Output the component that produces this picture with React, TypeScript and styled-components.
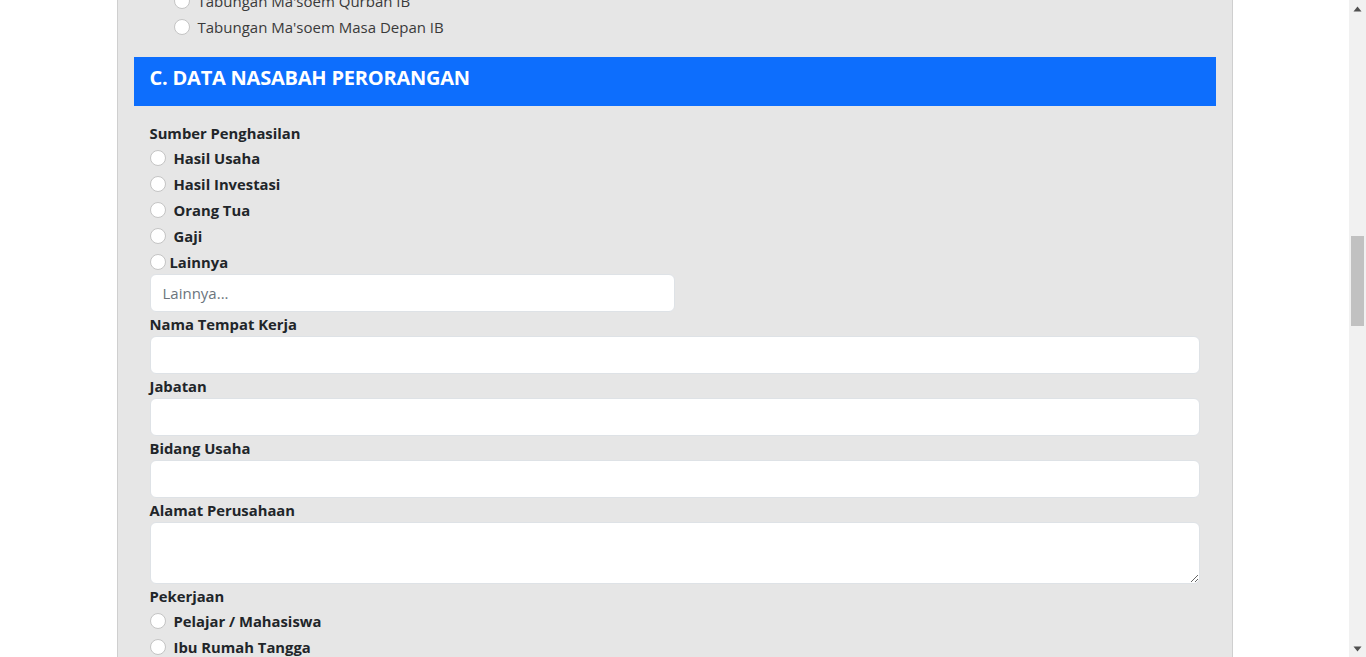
import React from "react";
import styled, { createGlobalStyle } from "styled-components";

const Global = createGlobalStyle`
  html, body { margin: 0; padding: 0; height: 100%; overflow: hidden; background: #fff; }
  body { font-family: "Open Sans", "Noto Sans", sans-serif; color: #212529; }
  #root { height: 100%; }
`;

const Viewport = styled.div`
  display: flex;
  height: 657px;
  width: 1366px;
  overflow: hidden;
`;

const Page = styled.div`
  flex: 1;
  overflow: hidden;
  background: #fff;
`;

const Sheet = styled.div`
  width: 1116px;
  box-sizing: border-box;
  margin: -12px auto 0;
  background: #e6e6e6;
  border-left: 1px solid #cfcfcf;
  border-right: 1px solid #cfcfcf;
  padding: 0 16px;
  min-height: 700px;
`;

const OptionList = styled.div<{ $indent?: boolean }>`
  display: flex;
  flex-direction: column;
  padding-left: ${(p) => (p.$indent ? "40px" : "0")};
`;

const OptionRow = styled.label<{ $bold?: boolean; $tight?: boolean }>`
  display: flex;
  align-items: center;
  height: 26px;
  font-size: ${(p) => (p.$bold ? "14.8px" : "15px")};
  font-weight: ${(p) => (p.$bold ? 700 : 400)};
  color: ${(p) => (p.$bold ? "#212529" : "#3a3a3a")};
  gap: ${(p) => (p.$tight ? "4px" : "8px")};
  white-space: nowrap;
`;

const Radio = styled.span`
  width: 16px;
  height: 16px;
  box-sizing: border-box;
  border-radius: 50%;
  background: #fff;
  border: 1px solid #c4c4c4;
  flex: none;
`;

const SectionHeader = styled.div`
  margin-top: 17px;
  height: 49px;
  box-sizing: border-box;
  background: #0d6efd;
  color: #fff;
  display: flex;
  align-items: center;
  padding: 0 16px 8px;
  font-size: 20px;
  font-weight: 700;
  letter-spacing: -0.22px;
`;

const FormBody = styled.div`
  padding: 15px 16px 0;
  display: flex;
  flex-direction: column;
`;

const FieldLabel = styled.div`
  height: 24px;
  line-height: 24px;
  font-size: 14.8px;
  font-weight: 700;
  color: #212529;
`;

const TextInput = styled.input<{ $narrow?: boolean }>`
  display: block;
  box-sizing: border-box;
  width: ${(p) => (p.$narrow ? "525px" : "100%")};
  height: 38px;
  margin-top: ${(p) => (p.$narrow ? "-1px" : "0")};
  border: 1px solid #dee2e6;
  border-radius: 6px;
  background: #fff;
  padding: 6px 12px;
  font-family: inherit;
  font-size: 15px;
  color: #212529;
  outline: none;
  &::placeholder { color: #6c757d; }
`;

const TextArea = styled.textarea`
  display: block;
  box-sizing: border-box;
  width: 100%;
  height: 62px;
  border: 1px solid #dee2e6;
  border-radius: 6px;
  background: #fff;
  padding: 6px 12px;
  font-family: inherit;
  font-size: 15px;
  outline: none;
  resize: vertical;
`;

const ScrollRail = styled.div`
  width: 17px;
  height: 657px;
  background: #f1f1f1;
  display: flex;
  flex-direction: column;
  flex: none;
`;

const ArrowBox = styled.div`
  height: 17px;
  display: flex;
  align-items: center;
  justify-content: center;
`;

const Track = styled.div`
  flex: 1;
  display: flex;
  flex-direction: column;
  align-items: center;
`;

const Thumb = styled.div`
  margin-top: 219px;
  width: 13px;
  height: 90px;
  background: #c1c1c1;
`;

const Arrow = ({ up }: { up?: boolean }) => (
  <svg width="9" height="6" viewBox="0 0 9 6">
    <polygon points={up ? "4.5,0.5 8.5,5.5 0.5,5.5" : "0.5,0.5 8.5,0.5 4.5,5.5"} fill="#505050" />
  </svg>
);

const sumber = ["Hasil Usaha", "Hasil Investasi", "Orang Tua", "Gaji"];

export default function App() {
  return (
    <>
      <Global />
      <Viewport>
        <Page>
          <Sheet>
            <OptionList $indent>
              <OptionRow>
                <Radio />
                Tabungan Ma'soem Qurban IB
              </OptionRow>
              <OptionRow>
                <Radio />
                Tabungan Ma'soem Masa Depan IB
              </OptionRow>
            </OptionList>
            <SectionHeader>C. DATA NASABAH PERORANGAN</SectionHeader>
            <FormBody>
              <FieldLabel>Sumber Penghasilan</FieldLabel>
              <OptionList>
                {sumber.map((s) => (
                  <OptionRow $bold key={s}>
                    <Radio />
                    {s}
                  </OptionRow>
                ))}
                <OptionRow $bold $tight>
                  <Radio />
                  Lainnya
                </OptionRow>
              </OptionList>
              <TextInput $narrow placeholder="Lainnya..." />
              <FieldLabel>Nama Tempat Kerja</FieldLabel>
              <TextInput />
              <FieldLabel>Jabatan</FieldLabel>
              <TextInput />
              <FieldLabel>Bidang Usaha</FieldLabel>
              <TextInput />
              <FieldLabel>Alamat Perusahaan</FieldLabel>
              <TextArea />
              <FieldLabel>Pekerjaan</FieldLabel>
              <OptionList>
                <OptionRow $bold>
                  <Radio />
                  Pelajar / Mahasiswa
                </OptionRow>
                <OptionRow $bold>
                  <Radio />
                  Ibu Rumah Tangga
                </OptionRow>
              </OptionList>
            </FormBody>
          </Sheet>
        </Page>
        <ScrollRail>
          <ArrowBox>
            <Arrow up />
          </ArrowBox>
          <Track>
            <Thumb />
          </Track>
          <ArrowBox>
            <Arrow />
          </ArrowBox>
        </ScrollRail>
      </Viewport>
    </>
  );
}
